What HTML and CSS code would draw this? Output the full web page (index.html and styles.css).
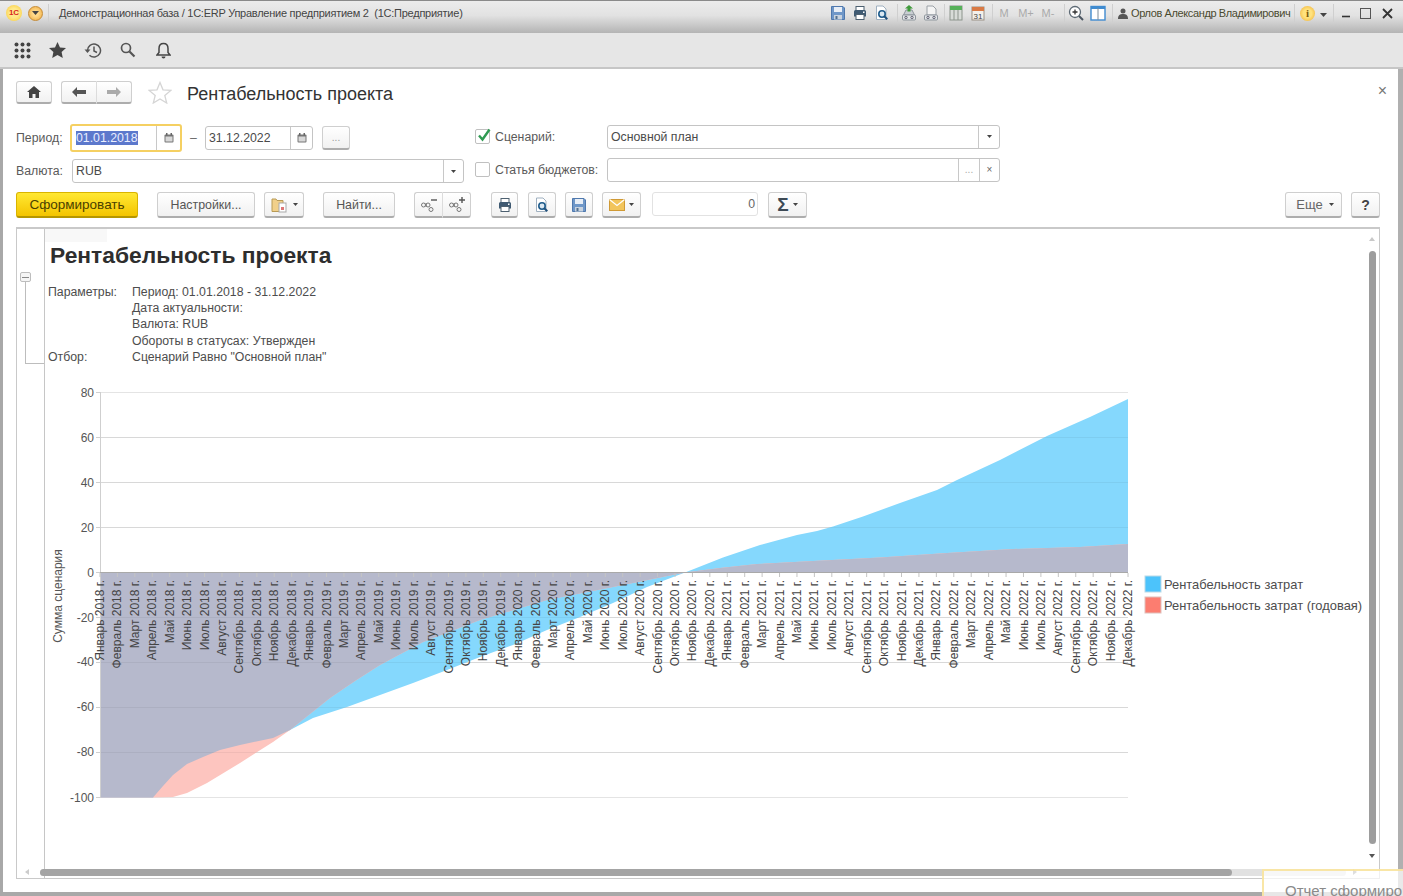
FILE: index.html
```html
<!DOCTYPE html>
<html lang="ru">
<head>
<meta charset="utf-8">
<title>Рентабельность проекта</title>
<link rel="stylesheet" href="styles.css">
</head>
<body>
<svg class="defs" width="0" height="0" aria-hidden="true">
  <symbol id="i-save" viewBox="0 0 16 16"><path d="M1.500 1.500h11.500l1.500 1.500v11.500h-13z" fill="#6f97c8" stroke="#4f78ad"/><rect x="4" y="2" width="8" height="5" fill="#e8eef6"/><rect x="4" y="10" width="8" height="4.500" fill="#c9d3df"/><rect x="5.500" y="11" width="2" height="3" fill="#52708f"/></symbol>
  <symbol id="i-print" viewBox="0 0 16 16"><rect x="4" y="1.500" width="8" height="4" fill="#fff" stroke="#4d6070"/><path d="M2 6.500a1.500 1.500 0 0 1 1.500-1.500h9a1.500 1.500 0 0 1 1.500 1.500v5h-12z" fill="#3f5a72"/><rect x="4" y="9.500" width="8" height="5" fill="#fff" stroke="#4d6070"/><rect x="11" y="6.500" width="1.500" height="1.500" fill="#fff"/></symbol>
  <symbol id="i-preview" viewBox="0 0 16 16"><path d="M2.500 1h6.500l3 3v10.500h-9.500z" fill="#fff" stroke="#9fb0c0"/><circle cx="8" cy="9" r="3.200" fill="#dbe8f2" stroke="#1f5c8c" stroke-width="1.600"/><path d="M10.300 11.300l3 3" stroke="#1f4f7a" stroke-width="2"/></symbol>
  <symbol id="i-caret" viewBox="0 0 7 4"><path d="M0 0h7l-3.500 4z" fill="#444"/></symbol>
  <symbol id="i-cal" viewBox="0 0 10 10"><rect x=".5" y="1.500" width="9" height="8" rx="1" fill="#777"/><rect x="1.500" y="3.500" width="7" height="5" fill="#d8d8d8"/><rect x="2" y="0" width="1.500" height="2.500" fill="#666"/><rect x="6.500" y="0" width="1.500" height="2.500" fill="#666"/></symbol>
  <symbol id="i-abc" viewBox="0 0 18 16"><g fill="none" stroke="#777"><circle cx="3.500" cy="8" r="2"/><circle cx="8" cy="8" r="2"/><path d="M6 6v4"/><circle cx="11" cy="12.500" r="2"/></g></symbol>
</svg>

<header class="titlebar">
  <span class="logo">1С</span>
  <span class="menu-dot"><svg class="caret" width="7" height="4"><use href="#i-caret"/></svg></span>
  <span class="tb-sep tb-sep-left"></span>
  <span class="window-title">Демонстрационная база / 1С:ERP Управление предприятием 2&nbsp; (1С:Предприятие)</span>
  <div class="tb-tools">
    <svg class="tb-ico" width="16" height="16"><use href="#i-save"/></svg>
    <svg class="tb-ico" width="16" height="16"><use href="#i-print"/></svg>
    <svg class="tb-ico" width="16" height="16"><use href="#i-preview"/></svg>
    <span class="tb-sep tb-sep-m4"></span>
    <svg class="tb-ico" width="16" height="16" viewBox="0 0 16 16"><path d="M5 5h6l2.500 5h-11z" fill="#c9ced3" stroke="#8d959c"/><rect x="1.500" y="10" width="13" height="5" rx="1" fill="#e2e5e8" stroke="#8d959c"/><circle cx="5" cy="12.500" r="1.200" fill="none" stroke="#667"/><circle cx="11" cy="12.500" r="1.200" fill="none" stroke="#667"/><path d="M8 0l4 3.500h-2.500v3h-3v-3h-2.500z" fill="#3f9a3a"/></svg>
    <svg class="tb-ico" width="16" height="16" viewBox="0 0 16 16"><path d="M4 1h6l3 3v6h-9z" fill="#f4f4f4" stroke="#9aa0a6"/><rect x="1.500" y="10" width="13" height="5" rx="1" fill="#e2e5e8" stroke="#8d959c"/><circle cx="5" cy="12.500" r="1.200" fill="none" stroke="#667"/><circle cx="11" cy="12.500" r="1.200" fill="none" stroke="#667"/></svg>
    <span class="tb-sep tb-sep-m2"></span>
    <svg class="tb-ico" width="16" height="16" viewBox="0 0 16 16"><rect x="2" y="1" width="12" height="14" fill="#d8dcd8" stroke="#8c948c"/><rect x="2" y="1" width="12" height="4" fill="#57b25a"/><path d="M6 5v10M10 5v10" stroke="#8c948c"/></svg>
    <svg class="tb-ico" width="16" height="16" viewBox="0 0 16 16"><rect x="2" y="2" width="12" height="13" fill="#f4f0ea" stroke="#9a8f84"/><rect x="2" y="2" width="12" height="4" fill="#d97a45"/><text x="8" y="13.500" class="cal-text">31</text></svg>
    <span class="tb-sep tb-sep-m3"></span>
    <span class="mem">M</span><span class="mem">M+</span><span class="mem">M-</span>
    <span class="tb-sep tb-sep-m5"></span>
    <svg class="tb-ico" width="16" height="16" viewBox="0 0 16 16"><circle cx="7" cy="7" r="5.500" fill="#fff" stroke="#5d6a75" stroke-width="1.300"/><path d="M4.500 7h5M7 4.500v5" stroke="#333" stroke-width="1.300"/><path d="M11 11l4 4" stroke="#4a5560" stroke-width="2"/></svg>
    <svg class="tb-ico" width="16" height="16" viewBox="0 0 16 16"><rect x="1" y="1.500" width="14" height="13.500" fill="#fff" stroke="#3f8bd0" stroke-width="1.400"/><rect x="1" y="1.500" width="14" height="2.500" fill="#3f8bd0"/><path d="M8 3v12" stroke="#7d8c99"/></svg>
    <span class="tb-sep tb-sep-m3"></span>
    <svg class="user-ico" width="10" height="11" viewBox="0 0 10 11"><circle cx="5" cy="3" r="2.500" fill="#555"/><path d="M0 11c0-4 2-5 5-5s5 1 5 5z" fill="#555"/></svg>
    <span class="user-name">Орлов Александр Владимирович</span>
    <span class="tb-sep"></span>
    <span class="info-dot">i</span>
    <svg class="info-caret" width="7" height="4"><use href="#i-caret"/></svg>
    <span class="tb-sep"></span>
    <svg class="win-btn win-min" width="10" height="10" viewBox="0 0 10 10"><path d="M1 8.500h8" stroke="#333" stroke-width="1.600"/></svg>
    <svg class="win-btn" width="11" height="11" viewBox="0 0 11 11"><rect x=".5" y=".5" width="10" height="10" fill="none" stroke="#555"/></svg>
    <svg class="win-btn win-close" width="11" height="11" viewBox="0 0 11 11"><path d="M1 1l9 9M10 1l-9 9" stroke="#333" stroke-width="1.800"/></svg>
  </div>
</header>

<nav class="panelbar">
  <span class="pb-cell"><svg width="17" height="17" viewBox="0 0 17 17"><g fill="#444"><circle cx="2.500" cy="2.500" r="2"/><circle cx="8.500" cy="2.500" r="2"/><circle cx="14.500" cy="2.500" r="2"/><circle cx="2.500" cy="8.500" r="2"/><circle cx="8.500" cy="8.500" r="2"/><circle cx="14.500" cy="8.500" r="2"/><circle cx="2.500" cy="14.500" r="2"/><circle cx="8.500" cy="14.500" r="2"/><circle cx="14.500" cy="14.500" r="2"/></g></svg></span>
  <span class="pb-cell"><svg width="17" height="16" viewBox="0 0 17 16"><path d="M8.500 0l2.500 5.400 6 .7-4.400 4 1.200 5.900-5.300-3-5.300 3 1.200-5.900-4.400-4 6-.7z" fill="#444"/></svg></span>
  <span class="pb-cell"><svg width="18" height="17" viewBox="0 0 18 17"><path d="M3.500 8.500a6.500 6.500 0 1 1 2 4.700" fill="none" stroke="#555" stroke-width="1.500"/><path d="M0.500 7.500h6l-3 3.500z" fill="#555"/><path d="M10 4.500v4.500l3 1.500" fill="none" stroke="#555" stroke-width="1.500"/></svg></span>
  <span class="pb-cell"><svg width="16" height="16" viewBox="0 0 16 16"><circle cx="6" cy="6" r="4.500" fill="none" stroke="#555" stroke-width="1.700"/><path d="M9.500 9.500l5 5" stroke="#555" stroke-width="2.200"/></svg></span>
  <span class="pb-cell"><svg width="15" height="17" viewBox="0 0 15 17"><path d="M7.500 1.500c-3 0-4.500 2-4.500 5v4l-2 2.500h13l-2-2.500v-4c0-3-1.500-5-4.500-5z" fill="none" stroke="#444" stroke-width="1.500"/><path d="M5.500 14.500a2 2 0 0 0 4 0z" fill="#444"/></svg></span>
</nav>

<main class="page">
  <div class="form-head">
    <button class="btn w36"><svg width="14" height="12" viewBox="0 0 14 12"><path d="M7 0l7 6h-2v6h-3.500v-4h-3v4h-3.500v-6h-2z" fill="#444"/></svg></button>
    <div class="btn-pair m9">
      <button class="btn w36 pair-l"><svg width="14" height="10" viewBox="0 0 14 10"><path d="M0 5l5-5v3h9v4h-9v3z" fill="#555"/></svg></button>
      <button class="btn w35 pair-r"><svg width="14" height="10" viewBox="0 0 14 10"><path d="M14 5l-5-5v3h-9v4h9v3z" fill="#aaa"/></svg></button>
    </div>
    <svg class="fav" width="24" height="23" viewBox="0 0 24 23"><path d="M12 1.500l3 7.300 7.800.6-6 5 1.900 7.600-6.700-4.100-6.700 4.100 1.900-7.600-6-5 7.800-.6z" fill="#fff" stroke="#d5d5d5" stroke-width="1.300"/></svg>
    <h2 class="form-title">Рентабельность проекта</h2>
    <span class="form-close">×</span>
  </div>

  <div class="form-row row-1">
    <label class="lbl w54">Период:</label>
    <div class="field date focused"><span class="value"><span class="selected">01.01.2018</span></span><span class="fbtn w24"><svg width="10" height="10"><use href="#i-cal"/></svg></span></div>
    <span class="dash">–</span>
    <div class="field date"><span class="value">31.12.2022</span><span class="fbtn w22"><svg width="10" height="10"><use href="#i-cal"/></svg></span></div>
    <button class="btn dots m9">...</button>
    <span class="check on first"><svg width="16" height="15" viewBox="0 0 16 15"><path d="M3 7.500l3.500 4 7-10" fill="none" stroke="#2f9a52" stroke-width="2.400"/></svg></span>
    <label class="lbl check-lbl">Сценарий:</label>
    <div class="field wide"><span class="value">Основной план</span><span class="fbtn w21"><svg class="caret" width="5" height="3"><use href="#i-caret"/></svg></span></div>
  </div>

  <div class="form-row row-2">
    <label class="lbl w56">Валюта:</label>
    <div class="field currency"><span class="value">RUB</span><span class="fbtn w20"><svg class="caret" width="5" height="3"><use href="#i-caret"/></svg></span></div>
    <span class="check second"></span>
    <label class="lbl check-lbl">Статья бюджетов:</label>
    <div class="field wide"><span class="value"></span><span class="fbtn w21 muted">...</span><span class="fbtn w20">×</span></div>
  </div>

  <div class="cmd-row">
    <button class="btn primary w122">Сформировать</button>
    <button class="btn w98 m19">Настройки...</button>
    <button class="btn w40 m9"><svg width="18" height="17" viewBox="0 0 18 17"><path d="M1 3h4l1 1.500h6v11h-11z" fill="#f1d08a" stroke="#b89a55"/><rect x="8" y="7" width="7" height="9" fill="#fff" stroke="#a9a9a9"/><rect x="10" y="11" width="3" height="3" fill="#d77"/></svg><svg class="caret" width="5" height="3"><use href="#i-caret"/></svg></button>
    <button class="btn w72 m19">Найти...</button>
    <div class="btn-pair m19">
      <button class="btn w29 pair-l"><svg width="18" height="16" viewBox="0 0 18 16"><use href="#i-abc" width="18" height="16"/><path d="M11 3h6" stroke="#555" stroke-width="1.400"/></svg></button>
      <button class="btn w28 pair-r"><svg width="18" height="16" viewBox="0 0 18 16"><use href="#i-abc" width="18" height="16"/><path d="M11 3h6M14 0v6" stroke="#555" stroke-width="1.400"/></svg></button>
    </div>
    <button class="btn w27 m20"><svg width="16" height="16"><use href="#i-print"/></svg></button>
    <button class="btn w28 m10"><svg width="16" height="16"><use href="#i-preview"/></svg></button>
    <button class="btn w28 m9"><svg width="16" height="16"><use href="#i-save"/></svg></button>
    <button class="btn w39 m9"><svg width="16" height="12" viewBox="0 0 16 12"><rect x=".5" y=".5" width="15" height="11" fill="#f2c55c" stroke="#d09a35"/><path d="M.5 .5l7.500 6 7.500-6" fill="none" stroke="#fff" stroke-width="1.200"/></svg><svg class="caret" width="5" height="3"><use href="#i-caret"/></svg></button>
    <div class="sum-field m11">0</div>
    <button class="btn w39 m10 sigma"><span>Σ</span><svg class="caret" width="5" height="3"><use href="#i-caret"/></svg></button>
    <button class="btn w57 more">Еще<svg class="caret" width="5" height="3"><use href="#i-caret"/></svg></button>
    <button class="btn w29 m9 help">?</button>
  </div>

  <section class="report">
    <div class="gutter">
      <span class="collapse"></span>
      <span class="branch"></span>
    </div>
    <div class="sheet">
      <span class="cell-mark"></span>
      <h1 class="report-title">Рентабельность проекта</h1>
      <dl class="params">
        <dt>Параметры:</dt><dd>Период: 01.01.2018 - 31.12.2022</dd>
        <dt></dt><dd>Дата актуальности:</dd>
        <dt></dt><dd>Валюта: RUB</dd>
        <dt></dt><dd>Обороты в статусах: Утвержден</dd>
        <dt>Отбор:</dt><dd>Сценарий Равно "Основной план"</dd>
      </dl>
      <svg class="chart" width="1334" height="300" viewBox="45 380 1334 300" overflow="visible">
        <path class="grid" d="M100 392.500H1128M100 437.500H1128M100 482.500H1128M100 527.500H1128M100 617.500H1128M100 662.500H1128M100 707.500H1128M100 752.500H1128M100 797.500H1128"/>
        <path class="s-blue" d="M100 572.500V797.500H153L163 786L173 775L187 764L203 757L220 750L240 745L273 738L290 730L313 718L347 707L380 695L413 683L447 670L480 657L513 645L547 630L580 617L613 603L647 587L685 572.500L723 557.500L760 545L797 535L817 531L833 526.500L863 516.500L900 503L937 490L957 480L1000 460L1047 436L1090 417L1128 399V572.500Z"/>
        <path class="s-pink" d="M100 572.500V797.500H153L173 797L187 793L207 783L240 763L273 742L290 730L310 714L330 698L355 681L380 665L423 642L480 620L547 600L613 587L685 572.500L720 568L757 564L813 561L880 557.500L947 553L1013 549L1080 547L1128 544V572.500Z"/>
        <path class="s-both" d="M100 572.500V797.500H153L163 786L173 775L187 764L203 757L220 750L240 745L273 738L290 730L310 714L330 698L355 681L380 665L423 642L480 620L547 600L613 587L685 572.500L720 568L757 564L813 561L880 557.500L947 553L1013 549L1080 547L1128 544V572.500Z"/>
        <path class="grid-over" d="M100 437.500H1128M100 482.500H1128M100 527.500H1128M100 617.500H1128M100 662.500H1128M100 707.500H1128M100 752.500H1128"/>
        <path class="axis-y" d="M100.500 392V798M96 392.500H100M96 437.500H100M96 482.500H100M96 527.500H100M96 572.500H100M96 617.500H100M96 662.500H100M96 707.500H100M96 752.500H100M96 797.500H100"/>
        <path class="axis-x" d="M100 572.500H1128"/>
        <path class="ticks" d="M99.500 575H1129"/>
        <g class="y-labels">
          <text x="94" y="397">80</text><text x="94" y="442">60</text><text x="94" y="487">40</text><text x="94" y="532">20</text><text x="94" y="577">0</text><text x="94" y="622">-20</text><text x="94" y="666">-40</text><text x="94" y="711">-60</text><text x="94" y="756">-80</text><text x="94" y="802">-100</text>
        </g>
        <text class="y-title" transform="translate(62,596) rotate(-90)">Сумма сценария</text>
        <g class="x-labels">
          <text transform="translate(100,580) rotate(-90)">Январь 2018 г.</text>
          <text transform="translate(117.400,580) rotate(-90)">Февраль 2018 г.</text>
          <text transform="translate(134.800,580) rotate(-90)">Март 2018 г.</text>
          <text transform="translate(152.300,580) rotate(-90)">Апрель 2018 г.</text>
          <text transform="translate(169.700,580) rotate(-90)">Май 2018 г.</text>
          <text transform="translate(187.100,580) rotate(-90)">Июнь 2018 г.</text>
          <text transform="translate(204.500,580) rotate(-90)">Июль 2018 г.</text>
          <text transform="translate(222,580) rotate(-90)">Август 2018 г.</text>
          <text transform="translate(239.400,580) rotate(-90)">Сентябрь 2018 г.</text>
          <text transform="translate(256.800,580) rotate(-90)">Октябрь 2018 г.</text>
          <text transform="translate(274.200,580) rotate(-90)">Ноябрь 2018 г.</text>
          <text transform="translate(291.700,580) rotate(-90)">Декабрь 2018 г.</text>
          <text transform="translate(309.100,580) rotate(-90)">Январь 2019 г.</text>
          <text transform="translate(326.500,580) rotate(-90)">Февраль 2019 г.</text>
          <text transform="translate(343.900,580) rotate(-90)">Март 2019 г.</text>
          <text transform="translate(361.400,580) rotate(-90)">Апрель 2019 г.</text>
          <text transform="translate(378.800,580) rotate(-90)">Май 2019 г.</text>
          <text transform="translate(396.200,580) rotate(-90)">Июнь 2019 г.</text>
          <text transform="translate(413.600,580) rotate(-90)">Июль 2019 г.</text>
          <text transform="translate(431.100,580) rotate(-90)">Август 2019 г.</text>
          <text transform="translate(448.500,580) rotate(-90)">Сентябрь 2019 г.</text>
          <text transform="translate(465.900,580) rotate(-90)">Октябрь 2019 г.</text>
          <text transform="translate(483.300,580) rotate(-90)">Ноябрь 2019 г.</text>
          <text transform="translate(500.800,580) rotate(-90)">Декабрь 2019 г.</text>
          <text transform="translate(518.200,580) rotate(-90)">Январь 2020 г.</text>
          <text transform="translate(535.600,580) rotate(-90)">Февраль 2020 г.</text>
          <text transform="translate(553,580) rotate(-90)">Март 2020 г.</text>
          <text transform="translate(570.400,580) rotate(-90)">Апрель 2020 г.</text>
          <text transform="translate(587.900,580) rotate(-90)">Май 2020 г.</text>
          <text transform="translate(605.300,580) rotate(-90)">Июнь 2020 г.</text>
          <text transform="translate(622.700,580) rotate(-90)">Июль 2020 г.</text>
          <text transform="translate(640.100,580) rotate(-90)">Август 2020 г.</text>
          <text transform="translate(657.600,580) rotate(-90)">Сентябрь 2020 г.</text>
          <text transform="translate(675,580) rotate(-90)">Октябрь 2020 г.</text>
          <text transform="translate(692.400,580) rotate(-90)">Ноябрь 2020 г.</text>
          <text transform="translate(709.800,580) rotate(-90)">Декабрь 2020 г.</text>
          <text transform="translate(727.300,580) rotate(-90)">Январь 2021 г.</text>
          <text transform="translate(744.700,580) rotate(-90)">Февраль 2021 г.</text>
          <text transform="translate(762.100,580) rotate(-90)">Март 2021 г.</text>
          <text transform="translate(779.500,580) rotate(-90)">Апрель 2021 г.</text>
          <text transform="translate(797,580) rotate(-90)">Май 2021 г.</text>
          <text transform="translate(814.400,580) rotate(-90)">Июнь 2021 г.</text>
          <text transform="translate(831.800,580) rotate(-90)">Июль 2021 г.</text>
          <text transform="translate(849.200,580) rotate(-90)">Август 2021 г.</text>
          <text transform="translate(866.700,580) rotate(-90)">Сентябрь 2021 г.</text>
          <text transform="translate(884.100,580) rotate(-90)">Октябрь 2021 г.</text>
          <text transform="translate(901.500,580) rotate(-90)">Ноябрь 2021 г.</text>
          <text transform="translate(918.900,580) rotate(-90)">Декабрь 2021 г.</text>
          <text transform="translate(936.400,580) rotate(-90)">Январь 2022 г.</text>
          <text transform="translate(953.800,580) rotate(-90)">Февраль 2022 г.</text>
          <text transform="translate(971.200,580) rotate(-90)">Март 2022 г.</text>
          <text transform="translate(988.600,580) rotate(-90)">Апрель 2022 г.</text>
          <text transform="translate(1006.100,580) rotate(-90)">Май 2022 г.</text>
          <text transform="translate(1023.500,580) rotate(-90)">Июнь 2022 г.</text>
          <text transform="translate(1040.900,580) rotate(-90)">Июль 2022 г.</text>
          <text transform="translate(1058.300,580) rotate(-90)">Август 2022 г.</text>
          <text transform="translate(1075.800,580) rotate(-90)">Сентябрь 2022 г.</text>
          <text transform="translate(1093.200,580) rotate(-90)">Октябрь 2022 г.</text>
          <text transform="translate(1110.600,580) rotate(-90)">Ноябрь 2022 г.</text>
          <text transform="translate(1128,580) rotate(-90)">Декабрь 2022 г.</text>
        </g>
        <rect class="lg-blue" x="1145" y="576" width="16" height="16"/>
        <rect class="lg-pink" x="1145" y="597" width="16" height="16"/>
        <text class="lg-text" x="1164" y="588.500">Рентабельность затрат</text>
        <text class="lg-text" x="1164" y="609.500">Рентабельность затрат (годовая)</text>
      </svg>
      <div class="vscroll"><span class="arrow-up"></span><span class="vthumb"></span><span class="arrow-down"></span></div>
    </div>
    <div class="hscroll"><span class="arrow-left"></span><span class="htrack"><span class="hthumb"></span></span><span class="arrow-right"></span></div>
  </section>
</main>
<div class="toast">Отчет сформирован</div>
</body>
</html>
```
FILE: styles.css
```css
* { box-sizing: border-box; }
html, body { margin: 0; height: 100%; }
body {
  width: 1403px;
  height: 896px;
  overflow: hidden;
  display: flex;
  flex-direction: column;
  font: 12.300px "Liberation Sans", Arial, sans-serif;
  color: #4d4d4d;
  background: #fff;
  position: relative;
}
.defs { position: absolute; }
.cal-text { font: 8px "Liberation Sans", sans-serif; fill: #444; text-anchor: middle; }

/* window title bar */
.titlebar {
  height: 33px;
  flex: none;
  display: flex;
  align-items: center;
  padding: 0 10px 8px 6px;
  background: linear-gradient(#ececec 0, #e2e2e2 45%, #b4b4b4 100%);
  border-top: 1px solid #8a8a8a;
}
.logo {
  width: 16px; height: 16px;
  flex: none;
  border-radius: 50%;
  background: radial-gradient(circle, #ffe98a 40%, #f7c62f 100%);
  color: #d8261c;
  font: bold 8px/16px "Liberation Sans", sans-serif;
  text-align: center;
}
.menu-dot {
  width: 15px; height: 15px;
  flex: none;
  margin-left: 6px;
  border-radius: 50%;
  background: radial-gradient(circle, #ffd98a 30%, #eda83a 100%);
  border: 1px solid #c58b35;
  display: flex; align-items: center; justify-content: center;
}
.caret { flex: none; }
.tb-sep { width: 1px; height: 18px; background: #cfcfcf; flex: none; }
.tb-sep-left { margin-left: 5px; }
.window-title {
  margin-left: 10px;
  font-size: 11px;
  color: #444;
  white-space: nowrap;
  letter-spacing: -.25px;
}
.tb-tools { margin-left: auto; display: flex; align-items: center; }
.tb-ico { margin: 0 3px; flex: none; }
.tb-sep-m4 { margin-left: 4px; }
.tb-sep-m2 { margin-left: 2px; }
.tb-sep-m3 { margin-left: 3px; }
.tb-sep-m5 { margin-left: 5px; }
.mem { width: 22px; flex: none; text-align: center; color: #aaa; font-size: 11px; }
.user-ico { margin-left: 5px; flex: none; }
.user-name { width: 166px; flex: none; padding-left: 3px; font-size: 11px; color: #4a4a30; white-space: nowrap; letter-spacing: -.38px; }
.info-dot {
  width: 15px; height: 15px; flex: none; margin-left: 5px; border-radius: 50%;
  background: radial-gradient(circle, #ffe27d 40%, #eda92b 100%);
  color: #7a5a10; font: bold 11px/15px "Liberation Serif", serif; text-align: center;
}
.info-caret { margin: 4px 6px 0 5px; flex: none; }
.win-btn { flex: none; margin-left: 9px; }
.win-min { margin-left: 7px; }
.win-close { margin-left: 11px; }

/* panel bar */
.panelbar {
  height: 36px;
  flex: none;
  display: flex;
  align-items: center;
  padding-left: 5px;
  background: #e6e6e6;
  border-bottom: 2px solid #c6c6c6;
}
.pb-cell { width: 35.200px; display: flex; justify-content: center; }

/* page */
.page {
  flex: 1;
  min-height: 0;
  position: relative;
  padding: 12px 18px 0 13px;
  border-left: 3px solid #a8a8a8;
  border-right: 5px solid #b0b0b0;
  border-bottom: 4px solid #a9a9a9;
  overflow: hidden;
  background: #fff;
}
.form-head { display: flex; align-items: center; height: 23px; }
.btn {
  height: 100%;
  padding: 0;
  flex: none;
  display: inline-flex;
  align-items: center;
  justify-content: center;
  gap: 4px;
  border: 1px solid #cfcfcf;
  border-bottom: 2px solid #adadad;
  border-radius: 3px;
  background: linear-gradient(#fff, #f1f1f1);
  font: 12.400px "Liberation Sans", sans-serif;
  color: #555;
}
.btn-pair { display: flex; height: 100%; flex: none; }
.pair-l { border-radius: 3px 0 0 3px; border-right: 1px solid #dcdcdc; }
.pair-r { border-radius: 0 3px 3px 0; border-left: 0; }
.w27 { width: 27px; } .w28 { width: 28px; } .w29 { width: 29px; }
.w35 { width: 35px; } .w36 { width: 36px; } .w39 { width: 39px; }
.w40 { width: 40px; } .w57 { width: 57px; } .w72 { width: 72px; }
.w98 { width: 98px; } .w122 { width: 122px; }
.m9 { margin-left: 9px; } .m10 { margin-left: 10px; } .m11 { margin-left: 11px; }
.m19 { margin-left: 19px; } .m20 { margin-left: 20px; }
.fav { margin-left: 16px; flex: none; }
.form-title { margin: 3px 0 0 15px; font-size: 18px; font-weight: 400; color: #333; }
.form-close { margin-left: auto; margin-right: -7px; font-size: 16px; line-height: 16px; color: #777; position: relative; top: -2px; }

/* filter rows */
.form-row { display: flex; align-items: center; }
.row-1 { height: 28px; margin-top: 20px; }
.row-2 { height: 26px; margin-top: 6px; }
.lbl { color: #5a5a5a; flex: none; white-space: nowrap; }
.w54 { width: 54px; } .w56 { width: 56px; }
.field {
  display: flex;
  height: 24px;
  flex: none;
  border: 1px solid #c4c4c4;
  border-radius: 3px;
  background: #fff;
  color: #4a4a4a;
}
.value { flex: 1; padding-left: 3px; line-height: 22px; overflow: hidden; white-space: nowrap; }
.fbtn {
  flex: none;
  display: flex;
  align-items: center;
  justify-content: center;
  border-left: 1px solid #c8c8c8;
  color: #666;
  font-size: 10px;
}
.w20 { width: 20px; } .w21 { width: 21px; } .w22 { width: 22px; } .w24 { width: 24px; }
.muted { color: #aaa; }
.date { width: 108px; }
.focused { width: 112px; height: 28px; border: 2px solid #f5d062; }
.focused .value { line-height: 24px; padding-left: 4px; }
.selected { background: #5c78cc; color: #e9eeff; }
.dash { width: 23px; text-align: center; color: #666; }
.dots { width: 28px; height: 24px; color: #999; font-size: 10px; }
.check {
  width: 15px; height: 15px; flex: none;
  border: 1px solid #c0c0c0; border-radius: 2px; background: #fff;
  display: flex; align-items: center; justify-content: center;
}
.on svg { margin: -3px -3px 0 0; flex: none; }
.first { margin-left: 125px; margin-top: -3px; }
.second { margin-left: 11px; margin-top: -3px; }
.check-lbl { width: 117px; padding-left: 5px; margin-top: -3px; }
.wide { width: 393px; margin-top: -3px; }
.currency { width: 392px; }

/* command row */
.cmd-row { display: flex; height: 26px; margin-top: 8px; align-items: stretch; }
.primary {
  background: linear-gradient(#ffe833, #f4c400);
  border: 1px solid #d9b400;
  border-bottom: 2px solid #b59600;
  color: #4a4100;
  font-size: 13.500px;
}
.sum-field {
  width: 106px; height: 24px; flex: none;
  border: 1px solid #e2e2e2; border-radius: 3px;
  text-align: right; padding-right: 2px; line-height: 23px; color: #666;
}
.sigma span { font: bold 19px/1 "Liberation Sans", sans-serif; color: #3d4a55; }
.more { margin-left: auto; padding-left: 3px; gap: 6px; color: #666; font-size: 13px; }
.help { font-weight: bold; font-size: 14px; color: #444; }

/* report */
.report {
  height: 652px;
  margin-top: 9px;
  display: flex;
  position: relative;
  border: 1px solid #c9c9c9;
  border-width: 2px 1px 1px;
}
.gutter {
  width: 28px; flex: none;
  border-right: 1px solid #c6c6c6;
  padding: 43px 0 0 3px;
}
.collapse {
  display: block;
  width: 11px; height: 10px;
  border: 1px solid #bdbdbd; border-radius: 2px;
  background: linear-gradient(#888, #888) center / 7px 1px no-repeat, #f5f5f5;
}
.branch {
  display: block;
  width: 19px; height: 82px;
  margin-left: 5px;
  border-left: 1px solid #bdbdbd;
  border-bottom: 1px solid #bdbdbd;
}
.sheet { flex: 1; min-width: 0; position: relative; padding-top: 12px; overflow: hidden; }
.cell-mark { position: absolute; left: 0; top: 0; width: 62px; height: 13px; background: #f8f8f8; }
.report-title {
  margin: 0 0 0 5px;
  font-size: 22.800px;
  line-height: 28px;
  font-weight: bold;
  color: #2e2e2e;
  position: relative;
}
.params {
  display: grid;
  grid-template-columns: 84px 1fr;
  margin: 15px 0 0 3px;
  line-height: 16.200px;
  color: #4d4d4d;
}
.params dt, .params dd { margin: 0; min-height: 16.200px; }
.chart { display: block; margin-top: 15px; overflow: visible; }
.grid { fill: none; stroke: #e4e4e4; }
.grid-over { fill: none; stroke: rgba(0, 0, 0, .05); }
.s-blue { fill: #85d8fd; }
.s-pink { fill: #fdc5bf; }
.s-both { fill: #b6b9cc; }
.axis-y { fill: none; stroke: #cfcfcf; }
.axis-x { fill: none; stroke: #a9a9a9; }
.ticks { fill: none; stroke: #c4c4c4; stroke-width: 4; stroke-dasharray: 1 16.424; }
.y-labels text { font-size: 12px; fill: #555; text-anchor: end; }
.y-title { font-size: 12px; fill: #555; text-anchor: middle; }
.x-labels text { font-size: 12px; fill: #444; text-anchor: end; dominant-baseline: central; }
.lg-blue { fill: #4cc3fb; stroke: #b9d9e8; }
.lg-pink { fill: #fc7d70; stroke: #e0c0bb; }
.lg-text { font-size: 12.900px; fill: #4d4d4d; }

/* scrollbars */
.vscroll {
  position: absolute; right: 0; top: 0; bottom: 22px; width: 14px;
  display: flex; flex-direction: column; align-items: center;
  padding-top: 8px;
}
.arrow-up { width: 0; height: 0; flex: none; border: 3.500px solid transparent; border-top: 0; border-bottom: 4px solid #c8c8c8; }
.arrow-down { width: 0; height: 0; flex: none; border: 3.500px solid transparent; border-bottom: 0; border-top: 4px solid #555; margin-top: 10px; }
.vthumb { flex: none; width: 7px; height: 593px; margin-top: 10px; border-radius: 4px; background: #9d9d9d; }
.hscroll {
  position: absolute; left: 0; right: 0; bottom: 2px; height: 8px;
  display: flex; align-items: center;
}
.arrow-left { width: 0; height: 0; flex: none; margin-left: 8px; border: 3.500px solid transparent; border-left: 0; border-right: 4px solid #ccc; }
.htrack { display: block; flex: none; width: 1306px; height: 7px; margin-left: 11px; border-radius: 4px; background: #e1e1e1; }
.hthumb { display: block; width: 1192px; height: 7px; border-radius: 4px; background: #a4a4a4; }
.arrow-right { width: 0; height: 0; flex: none; margin-left: 7px; border: 3.500px solid transparent; border-right: 0; border-left: 4px solid #888; }

/* notification */
.toast {
  position: absolute;
  left: 1262px; top: 869px;
  width: 160px; height: 40px;
  padding: 10px 0 0 21px;
  border: 2px solid rgba(248, 226, 150, .85);
  background: rgba(255, 255, 255, .72);
  font-size: 15px;
  line-height: 20px;
  color: #8a8a8a;
  white-space: nowrap;
}
```
